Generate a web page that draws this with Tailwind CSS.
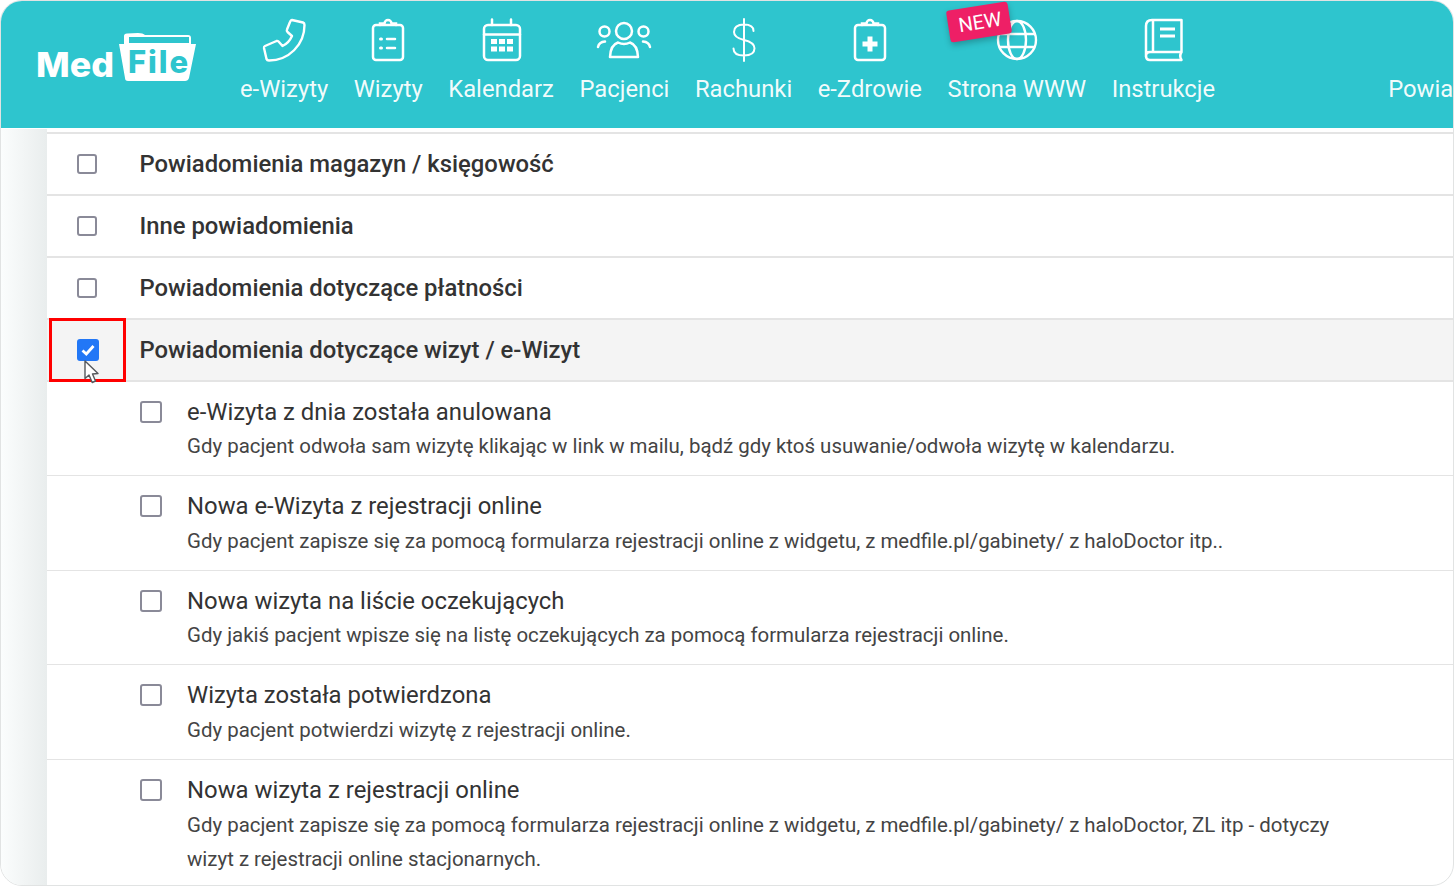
<!doctype html>
<html lang="pl">
<head>
<meta charset="utf-8">
<title>MedFile</title>
<script src="https://cdn.jsdelivr.net/npm/@tailwindcss/browser@4"></script>
</head>
<body class="bg-white">
<div class="relative h-[886px] w-[1454px] overflow-hidden rounded-[22px] border border-[#e1e3e3] bg-white font-['Roboto',sans-serif]">
  <header class="flex h-[127px] items-start bg-[#2ec5ce] text-[23.8px] text-white/95">
    <div class="ml-[35px] mt-[31px] w-[204px] shrink-0">
      <svg width="160" height="52" viewBox="35 32 160 52" fill="none">
        <text x="35" y="77" font-family="Inter" font-weight="800" font-size="34" fill="#fff" textLength="78" lengthAdjust="spacingAndGlyphs">Med</text>
        <path d="M123 44 L123 36 Q123 33.5 126 33.5 L137 33 Q142 33 144 35 L187 35 Q190 35 190 38 L190 44 L195 44 L188 78 Q187 81 184 81 L127 81 Q124 81 124 78 L118 44 Z" fill="#fff"/>
        <rect x="128" y="37" width="60" height="6" fill="#2ec5ce"/>
        <text x="127" y="73" font-family="Inter" font-weight="800" font-size="31" fill="#2ec5ce" textLength="60" lengthAdjust="spacing">File</text>
      </svg>
    </div>
    <nav class="flex flex-1 gap-[25.5px] whitespace-nowrap">
      <div class="relative flex flex-col items-center">
        <svg class="mt-[17px] h-[44px] w-[44px]" viewBox="263 17 44 44" fill="none" stroke="#fff" stroke-width="2.4" stroke-linejoin="round"><path d="M293 19 L304 21.5 Q305.5 22 305.5 24 C305.5 44 289.5 59.5 270 59.5 Q268 59.5 267.5 58 L265 47 Q264.8 45.5 266 45 L277.5 40 Q279 39.5 280 41 L283.5 45 C288 43 291 39.5 293 35 L288.5 31 Q287.3 30 288 28.5 L291 21 Q291.8 18.8 293 19 Z"/></svg>
        <span class="mt-[10px] leading-[34px]">e-Wizyty</span>
      </div>
      <div class="relative flex flex-col items-center">
        <svg class="mt-[17px] h-[44px] w-[44px]" viewBox="367 17 44 44" fill="none" stroke="#fff" stroke-width="2.5" stroke-linecap="round"><rect x="374" y="24" width="30" height="35" rx="3"/><path d="M381 24 V22.5 H385.5 A3.5 3.5 0 0 1 392.5 22.5 H397 V24"/><path d="M388 38 H396 M388 47 H396"/><path d="M381.5 38 H382.5 M381.5 47 H382.5" stroke-width="3"/></svg>
        <span class="mt-[10px] leading-[34px]">Wizyty</span>
      </div>
      <div class="relative flex flex-col items-center">
        <svg class="mt-[17px] h-[44px] w-[44px]" viewBox="479 17 44 44" fill="none" stroke="#fff" stroke-width="2.5" stroke-linecap="round"><rect x="484" y="24" width="36" height="35" rx="4"/><path d="M484 33.5 H520 M492 18.5 V24 M511 18.5 V24"/><path d="M491 38 h6 v5 h-6z M499 38 h6 v5 h-6z M507 38 h6 v5 h-6z M491 45.5 h6 v5 h-6z M499 45.5 h6 v5 h-6z M507 45.5 h6 v5 h-6z" fill="#fff" stroke="none"/></svg>
        <span class="mt-[10px] leading-[34px]">Kalendarz</span>
      </div>
      <div class="relative flex flex-col items-center">
        <svg class="mt-[17px] h-[44px] w-[60px]" viewBox="595 17 60 44" fill="none" stroke="#fff" stroke-width="2.5" stroke-linecap="round"><circle cx="625" cy="30" r="8"/><circle cx="605.5" cy="30.5" r="5"/><circle cx="644.5" cy="30.5" r="5"/><path d="M611 56 H639 Q638.5 44 631 41.5 Q625 44.5 619 41.5 Q611.5 44 611 56 Z" stroke-linejoin="round"/><path d="M599 46 Q600 41 606 40.5 M651 46 Q650 41 644 40.5"/></svg>
        <span class="mt-[10px] leading-[34px]">Pacjenci</span>
      </div>
      <div class="relative flex flex-col items-center">
        <svg class="mt-[17px] h-[44px] w-[44px]" viewBox="722 17 44 44" fill="none" stroke="#fff" stroke-width="2" stroke-linecap="round"><path d="M744 18 V60 M753.5 30 C753.5 25.5 749.5 23.5 744 23.5 C737.5 23.5 734 26.5 734 31 C734 36 739 37.8 744 39 C749.5 40.3 754.5 42 754.5 47.3 C754.5 52 750.5 54.5 744 54.5 C738 54.5 733.5 52.5 733.5 47.5"/></svg>
        <span class="mt-[10px] leading-[34px]">Rachunki</span>
      </div>
      <div class="relative flex flex-col items-center">
        <svg class="mt-[17px] h-[44px] w-[44px]" viewBox="848 17 44 44" fill="none" stroke="#fff" stroke-width="2.5" stroke-linecap="round"><rect x="855" y="24" width="30" height="35" rx="3"/><path d="M862 24 V22.5 H866.5 A3.5 3.5 0 0 1 873.5 22.5 H878 V24"/><path d="M870 35.5 V50.5 M862.5 43 H877.5" stroke-width="5" stroke-linecap="butt"/></svg>
        <span class="mt-[10px] leading-[34px]">e-Zdrowie</span>
      </div>
      <div class="relative flex flex-col items-center">
        <svg class="mt-[17px] h-[44px] w-[44px]" viewBox="995 17 44 44" fill="none" stroke="#fff" stroke-width="2.4"><circle cx="1017" cy="39" r="19"/><ellipse cx="1017" cy="39" rx="9" ry="19"/><path d="M999 33 H1035 M999 46 H1035"/></svg>
        <span class="mt-[10px] leading-[34px]">Strona WWW</span>
        <span class="absolute left-0 top-[5px] flex h-[32px] w-[62px] -rotate-[9deg] items-center justify-center rounded-[3px] bg-[#ee1f66] pl-[2px] text-[20px] leading-none text-white shadow-[0_3px_6px_rgba(0,0,0,0.25)]">NEW</span>
      </div>
      <div class="relative flex flex-col items-center">
        <svg class="mt-[17px] h-[44px] w-[44px]" viewBox="1141 17 44 44" fill="none" stroke="#fff" stroke-width="2.5" stroke-linejoin="round"><path d="M1152 19 H1181.5 V51 H1150 Q1146 51 1146 55 V25 Q1146 19 1152 19 Z"/><path d="M1153 19 V51 M1181.5 51 Q1179 55 1181.5 59 H1150 Q1146 59 1146 55"/><path d="M1160 28 H1175 M1160 35 H1175" stroke-width="2.8"/></svg>
        <span class="mt-[10px] leading-[34px]">Instrukcje</span>
      </div>
      <div class="ml-[147.5px] flex flex-col">
        <span class="mt-[71px] leading-[34px]">Powiadomienia</span>
      </div>
    </nav>
  </header>
  <div class="mt-[1px] flex">
    <aside class="h-[760px] w-[46px] shrink-0 bg-gradient-to-r from-[#fbfdfd] to-[#e9eded]"></aside>
    <main class="min-w-0 flex-1 pt-[3px] text-[#333]">
      <div class="border-t-2 border-[#e4e4e4]">
      <div class="flex h-[62px] items-center border-b-2 border-[#e4e4e4] pl-[30px] pt-[1px] text-[23.83px] font-medium">
        <span class="-mt-[2px] h-[20px] w-[20px] shrink-0 rounded-[3px] border-2 border-[#8a8a98]"></span>
        <span class="ml-[42.5px]">Powiadomienia magazyn / księgowość</span>
      </div>
      <div class="flex h-[62px] items-center border-b-2 border-[#e4e4e4] pl-[30px] pt-[1px] text-[23.83px] font-medium">
        <span class="-mt-[2px] h-[20px] w-[20px] shrink-0 rounded-[3px] border-2 border-[#8a8a98]"></span>
        <span class="ml-[42.5px]">Inne powiadomienia</span>
      </div>
      <div class="flex h-[62px] items-center border-b-2 border-[#e4e4e4] pl-[30px] pt-[1px] text-[23.83px] font-medium">
        <span class="-mt-[2px] h-[20px] w-[20px] shrink-0 rounded-[3px] border-2 border-[#8a8a98]"></span>
        <span class="ml-[42.5px]">Powiadomienia dotyczące płatności</span>
      </div>
      <div class="relative flex h-[62px] items-center border-b-2 border-[#e4e4e4] bg-[#f4f4f4] pl-[30px] text-[23.83px] font-medium">
        <span class="flex h-[22px] w-[22px] shrink-0 items-center justify-center rounded-[3px] bg-[#2277f6]">
          <svg class="h-[16px] w-[16px]" viewBox="0 0 16 16" fill="none" stroke="#fff" stroke-width="2.8"><path d="M2.5 8.5 L6.3 12 L13.5 4"/></svg>
        </span>
        <span class="ml-[40.5px] pt-[1px]">Powiadomienia dotyczące wizyt / e-Wizyt</span>
        <span class="absolute left-[2px] top-[-2px] h-[64px] w-[77px] border-[3px] border-[#f00]"></span>
        <svg class="absolute left-[37px] top-[40px] h-[25px] w-[18px]" viewBox="0 0 18 25"><path d="M1 1 V18.5 L5 15 L8.2 22.5 L11.5 21 L8.5 14 L14 13.5 Z" fill="#fff" stroke="#55585c" stroke-width="1.4" stroke-linejoin="round"/></svg>
      </div>
      <div class="h-[94px] border-b border-[#e4e4e4] pl-[93px] pt-[13px]">
        <div class="flex items-center text-[23.87px] leading-[34px]">
          <span class="h-[22px] w-[22px] shrink-0 rounded-[3px] border-2 border-[#8a8a98]"></span>
          <span class="ml-[25px]">e-Wizyta z dnia została anulowana</span>
        </div>
        <p class="pl-[47px] text-[20.45px] leading-[34px] text-[#444]">Gdy pacjent odwoła sam wizytę klikając w link w mailu, bądź gdy ktoś usuwanie/odwoła wizytę w kalendarzu.</p>
      </div>
      <div class="h-[95px] border-b border-[#e4e4e4] pl-[93px] pt-[13px]">
        <div class="flex items-center text-[23.87px] leading-[34px]">
          <span class="h-[22px] w-[22px] shrink-0 rounded-[3px] border-2 border-[#8a8a98]"></span>
          <span class="ml-[25px]">Nowa e-Wizyta z rejestracji online</span>
        </div>
        <p class="pl-[47px] pt-[1px] text-[20.45px] leading-[34px] text-[#444]">Gdy pacjent zapisze się za pomocą formularza rejestracji online z widgetu, z medfile.pl/gabinety/ z haloDoctor itp..</p>
      </div>
      <div class="h-[94px] border-b border-[#e4e4e4] pl-[93px] pt-[13px]">
        <div class="flex items-center text-[23.87px] leading-[34px]">
          <span class="h-[22px] w-[22px] shrink-0 rounded-[3px] border-2 border-[#8a8a98]"></span>
          <span class="ml-[25px]">Nowa wizyta na liście oczekujących</span>
        </div>
        <p class="pl-[47px] text-[20.45px] leading-[34px] text-[#444]">Gdy jakiś pacjent wpisze się na listę oczekujących za pomocą formularza rejestracji online.</p>
      </div>
      <div class="h-[95px] border-b border-[#e4e4e4] pl-[93px] pt-[13px]">
        <div class="flex items-center text-[23.87px] leading-[34px]">
          <span class="h-[22px] w-[22px] shrink-0 rounded-[3px] border-2 border-[#8a8a98]"></span>
          <span class="ml-[25px]">Wizyta została potwierdzona</span>
        </div>
        <p class="pl-[47px] pt-[1px] text-[20.45px] leading-[34px] text-[#444]">Gdy pacjent potwierdzi wizytę z rejestracji online.</p>
      </div>
      <div class="pl-[93px] pt-[13px]">
        <div class="flex items-center text-[23.87px] leading-[34px]">
          <span class="h-[22px] w-[22px] shrink-0 rounded-[3px] border-2 border-[#8a8a98]"></span>
          <span class="ml-[25px]">Nowa wizyta z rejestracji online</span>
        </div>
        <p class="w-[1196px] pl-[47px] pt-[1px] text-[20.45px] leading-[34px] text-[#444]">Gdy pacjent zapisze się za pomocą formularza rejestracji online z widgetu, z medfile.pl/gabinety/ z haloDoctor, ZL itp - dotyczy wizyt z rejestracji online stacjonarnych.</p>
      </div>
      </div>
    </main>
  </div>
</div>
</body>
</html>
